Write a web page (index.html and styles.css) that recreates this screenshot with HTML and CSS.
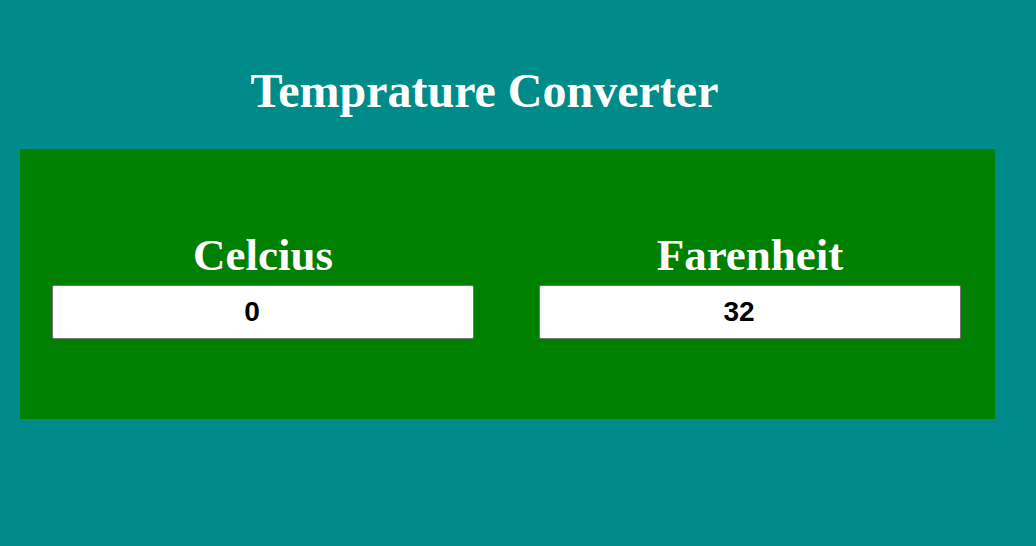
FILE: index.html
```html
<!DOCTYPE html>
<html>
<head>
<meta charset="utf-8">
<link rel="stylesheet" href="styles.css">
<title>Temprature Converter</title>
</head>
<body>
<div class="page">
  <h1 class="title">Temprature Converter</h1>
  <div class="panel">
    <div class="field">
      <div class="label">Celcius</div>
      <input class="value" type="text" value="0">
    </div>
    <div class="field">
      <div class="label">Farenheit</div>
      <input class="value" type="text" value="32">
    </div>
  </div>
</div>
</body>
</html>
```
FILE: styles.css
```css
html, body {
  margin: 0;
  padding: 0;
  background: #008b8b;
  height: 100%;
}
.page {
  padding: 64px 41px 0 20px;
}
.title {
  margin: 0 46px 32px 0;
  font-family: "Liberation Serif", "Times New Roman", serif;
  font-weight: bold;
  font-size: 48px;
  line-height: 53px;
  color: #fff;
  text-align: center;
}
.panel {
  background: #008000;
  height: 270px;
  padding: 0 32px;
  display: flex;
  gap: 65px;
  align-items: center;
}
.field {
  display: flex;
  flex-direction: column;
  align-items: center;
  gap: 5px;
}
.label {
  font-family: "Liberation Serif", "Times New Roman", serif;
  font-weight: bold;
  font-size: 45px;
  line-height: 50px;
  color: #fff;
}
.value {
  box-sizing: border-box;
  width: 422px;
  height: 54px;
  margin: 0;
  padding: 0 22px 0 0;
  border: 1px solid #767676;
  border-radius: 2px;
  background: #fff;
  font-family: "Liberation Sans", Arial, sans-serif;
  font-weight: bold;
  font-size: 28px;
  color: #000;
  text-align: center;
}
```
